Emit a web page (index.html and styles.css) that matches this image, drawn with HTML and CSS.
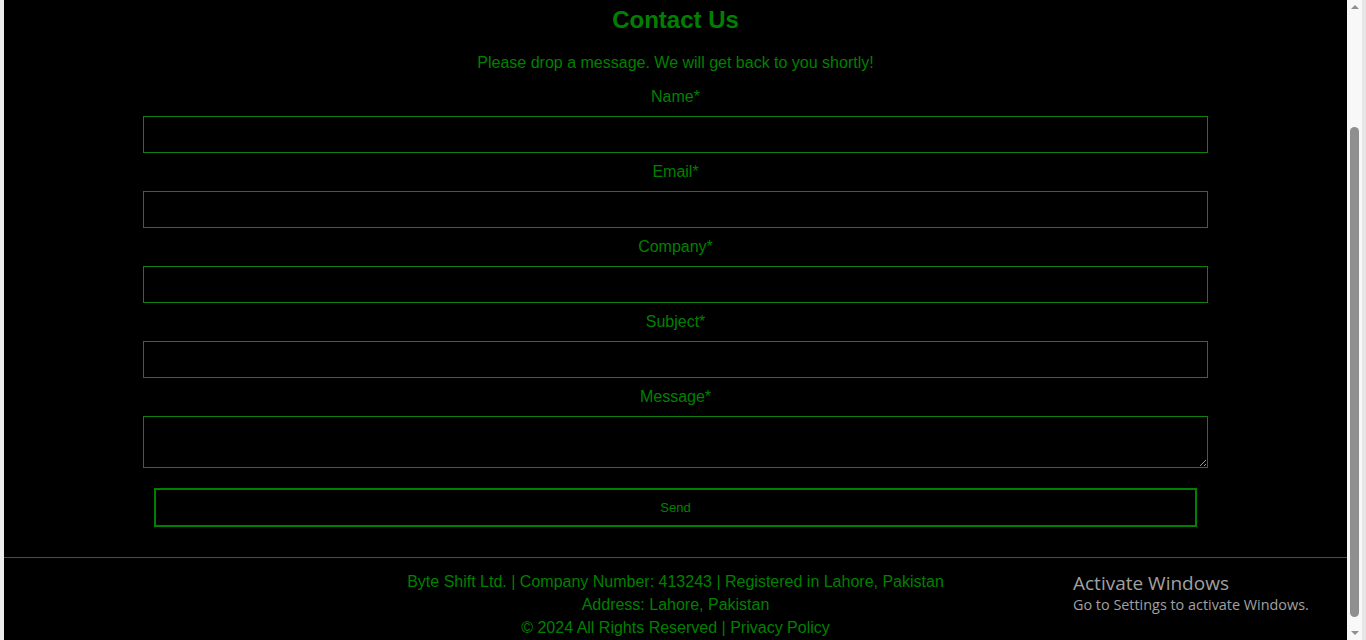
FILE: index.html
```html
<!DOCTYPE html>
<html lang="en">
<head>
<meta charset="utf-8">
<title>Contact Us</title>
<link rel="stylesheet" href="styles.css">
</head>
<body>
<div class="frame">
  <div class="edge"></div>
  <div class="page">
    <main class="contact">
      <h2 class="title">Contact Us</h2>
      <p class="lead">Please drop a message. We will get back to you shortly!</p>
      <form class="form">
        <label class="label" for="name">Name*</label>
        <input class="field" id="name" type="text">
        <label class="label" for="email">Email*</label>
        <input class="field" id="email" type="email">
        <label class="label" for="company">Company*</label>
        <input class="field" id="company" type="text">
        <label class="label" for="subject">Subject*</label>
        <input class="field" id="subject" type="text">
        <label class="label" for="message">Message*</label>
        <textarea class="field area" id="message"></textarea>
        <button class="send" type="button">Send</button>
      </form>
    </main>
    <footer class="footer">
      <p>Byte Shift Ltd. | Company Number: 413243 | Registered in Lahore, Pakistan</p>
      <p>Address: Lahore, Pakistan</p>
      <p>© 2024 All Rights Reserved | Privacy Policy</p>
    </footer>
  </div>
  <div class="scrollbar">
    <div class="arrow up"></div>
    <div class="thumb"></div>
    <div class="arrow down"></div>
  </div>
  <div class="edge right"></div>
</div>
<div class="watermark">
  <div class="wm-title">Activate Windows</div>
  <div class="wm-sub">Go to Settings to activate Windows.</div>
</div>
</body>
</html>
```

FILE: styles.css
```css
html, body {
  margin: 0;
  padding: 0;
  height: 640px;
  overflow: hidden;
}
body {
  font-family: "Liberation Sans", Arial, sans-serif;
  background: #000;
}
.frame {
  display: flex;
  height: 640px;
}
.edge {
  width: 4px;
  background: #ededed;
  flex: none;
}
.edge.right {
  width: 4px;
  background: #e6e6e6;
}
.page {
  flex: 1;
  background: #000;
  color: #008000;
  display: flex;
  flex-direction: column;
}
.contact {
  padding-top: 6px;
  text-align: center;
}
.title {
  margin: 0;
  font-size: 24px;
  line-height: 28px;
  font-weight: bold;
  color: #008000;
}
.lead {
  margin: 20px 0 0;
  font-size: 16px;
  line-height: 18px;
}
.form {
  display: flex;
  flex-direction: column;
  margin: 15px 139px 0;
}
.label {
  font-size: 16px;
  line-height: 18px;
  margin: 1px 0 10px;
  text-align: center;
}
.field {
  box-sizing: border-box;
  height: 37px;
  width: 100%;
  background: #000;
  border: 1px solid #118011;
  margin: 0 0 9px;
  color: #008000;
  font-family: inherit;
  outline: none;
}
.area {
  height: 52px;
  margin-bottom: 20px;
  resize: vertical;
}
.send {
  box-sizing: border-box;
  height: 39px;
  margin: 0 11px;
  background: #000;
  border: 2px solid #008000;
  color: #008000;
  font-family: "Liberation Sans", Arial, sans-serif;
  font-size: 13px;
}
.footer {
  margin-top: 30px;
  border-top: 1px solid #1a6e1a;
  padding-top: 12px;
  text-align: center;
  font-size: 16px;
  line-height: 23px;
}
.footer p {
  margin: 0;
}
.scrollbar {
  width: 15px;
  flex: none;
  background: #f8f8f8;
  position: relative;
}
.thumb {
  position: absolute;
  left: 3px;
  top: 127px;
  width: 9px;
  height: 490px;
  border-radius: 5px;
  background: #8f8f8f;
}
.arrow {
  position: absolute;
  left: 4px;
  width: 0;
  height: 0;
  border-left: 4px solid transparent;
  border-right: 4px solid transparent;
}
.arrow.up {
  top: 5px;
  border-bottom: 4px solid #8f8f8f;
}
.arrow.down {
  bottom: 5px;
  border-top: 4px solid #8f8f8f;
}
.watermark {
  position: absolute;
  left: 1073px;
  top: 571px;
  color: #a0a0a0;
  font-family: "Open Sans", "Noto Sans", sans-serif;
}
.wm-title {
  font-size: 19px;
  line-height: 24px;
}
.wm-sub {
  font-size: 14.4px;
  line-height: 20px;
}
```
